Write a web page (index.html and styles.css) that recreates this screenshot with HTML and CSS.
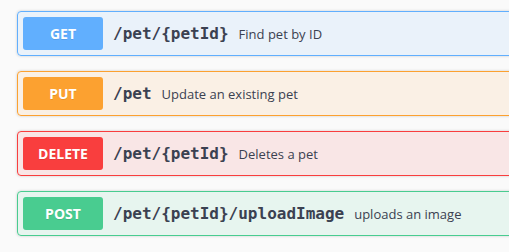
FILE: index.html
```html
<!DOCTYPE html>
<html lang="en">
<head>
    <meta charset="UTF-8">
    <meta name="viewport" content="width=device-width, initial-scale=1.0">
    <title>Pet operations</title>
    <link rel="stylesheet" href="styles.css">
</head>
<body>
    <div class="operations">
        <div class="opblock opblock-get">
            <div class="opblock-summary">
                <span class="method">GET</span>
                <span class="path">/pet/{petId}</span>
                <span class="description">Find pet by ID</span>
            </div>
        </div>
        <div class="opblock opblock-put">
            <div class="opblock-summary">
                <span class="method">PUT</span>
                <span class="path">/pet</span>
                <span class="description">Update an existing pet</span>
            </div>
        </div>
        <div class="opblock opblock-delete">
            <div class="opblock-summary">
                <span class="method">DELETE</span>
                <span class="path">/pet/{petId}</span>
                <span class="description">Deletes a pet</span>
            </div>
        </div>
        <div class="opblock opblock-post">
            <div class="opblock-summary">
                <span class="method">POST</span>
                <span class="path">/pet/{petId}/uploadImage</span>
                <span class="description">uploads an image</span>
            </div>
        </div>
    </div>
</body>
</html>
```

FILE: styles.css
```css
body {
    margin: 0;
    padding: 0;
    background-color: #fafafa;
    font-family: "Open Sans", sans-serif;
    overflow: hidden;
}

.operations {
    width: 600px;
    padding: 11px 0 0 17px;
}

.opblock {
    margin: 0 0 15px;
    border: 1px solid #000;
    border-radius: 4px;
    box-shadow: 0 0 3px rgba(0, 0, 0, 0.19);
}

.opblock-summary {
    display: flex;
    align-items: center;
    padding: 5px;
}

.method {
    min-width: 80px;
    padding: 6px 0;
    font-size: 14px;
    line-height: 21px;
    font-weight: 700;
    text-align: center;
    color: #fff;
    border-radius: 3px;
    text-shadow: 0 1px 0 rgba(0, 0, 0, 0.1);
}

.path {
    padding: 0 10px 0 10px;
    font-family: "DejaVu Sans Mono", monospace;
    font-size: 16px;
    font-weight: 700;
    color: #3b4151;
}

.description {
    font-size: 13px;
    color: #3b4151;
}

.opblock-get {
    background: rgba(97, 175, 254, 0.1);
    border-color: #61affe;
}

.opblock-get .method {
    background: #61affe;
}

.opblock-put {
    background: rgba(252, 161, 48, 0.1);
    border-color: #fca130;
}

.opblock-put .method {
    background: #fca130;
}

.opblock-delete {
    background: rgba(249, 62, 62, 0.1);
    border-color: #f93e3e;
}

.opblock-delete .method {
    background: #f93e3e;
}

.opblock-post {
    background: rgba(73, 204, 144, 0.1);
    border-color: #49cc90;
}

.opblock-post .method {
    background: #49cc90;
}
```
